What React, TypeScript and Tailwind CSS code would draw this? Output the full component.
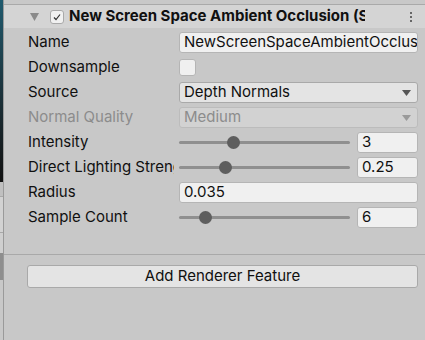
import React from "react";

const Slider = ({ pos, value }: { pos: number; value: string }) => (
  <div className="flex items-center gap-[7px] min-w-0">
    <div className="relative h-[21px] flex-1 min-w-0 flex items-center">
      <div className="h-[3px] w-full bg-[#8f8f8f] rounded-full"></div>
      <div
        className="absolute top-[4px] w-[13px] h-[13px] rounded-full bg-[#5e5e5e]"
        style={{ left: pos }}
      ></div>
    </div>
    <div className="w-[61px] shrink-0 h-[21px] bg-[#f0f0f0] border border-[#b5b5b5] rounded-[3px] px-[4px] flex items-center">
      {value}
    </div>
  </div>
);

const Row = ({
  label,
  disabled,
  children,
}: {
  label: string;
  disabled?: boolean;
  children: React.ReactNode;
}) => (
  <div className="flex items-center h-[25px]">
    <div
      className={`w-[146px] mr-[5px] shrink-0 overflow-hidden whitespace-nowrap ${
        disabled ? "text-[#8c8c8c]" : "text-[#101010]"
      }`}
    >
      {label}
    </div>
    <div className="flex-1 min-w-0">{children}</div>
  </div>
);

const App: React.FC = () => {
  return (
    <div
      className="w-[425px] h-[340px] bg-[#c8c8c8] flex overflow-hidden text-[15px] text-[#101010]"
      style={{ fontFamily: "Inter, 'Noto Sans', sans-serif" }}
    >
      {/* left window edge */}
      <div className="w-[3px] shrink-0 flex flex-col">
        <div className="h-[182px] bg-gradient-to-b from-[#1f5a6e] to-[#111]"></div>
        <div className="h-[15px] bg-[#c0c0c0] border-b border-[#a8a8a8]"></div>
        <div className="h-[36px] bg-[#d2d2d2] border-b border-[#a8a8a8]"></div>
        <div className="h-[20px] bg-[#cfcfcf]"></div>
        <div className="h-[27px] bg-[#8e8e8e]"></div>
        <div className="flex-1 bg-[#c8c8c8]"></div>
      </div>
      <div className="w-px shrink-0 bg-[#9a9a9a]"></div>

      <div className="flex-1 min-w-0 flex flex-col">
        <div className="h-[5px] border-b border-[#a9a9a9]"></div>
        {/* header */}
        <div className="h-[23px] bg-[#d4d4d4] flex items-center pl-[26px] pr-[13px]">
          <svg width="9" height="8" viewBox="0 0 9 8" className="mr-[11px] shrink-0">
            <path d="M0 0 H9 L4.5 8 Z" fill="#8a8a8a" />
          </svg>
          <div className="w-[14px] h-[14px] shrink-0 rounded-[3px] bg-[#f1f1f1] border border-[#a9a9a9] flex items-center justify-center mr-[5px]">
            <svg width="10" height="10" viewBox="0 0 10 10">
              <path d="M2 5.5 L4 7.5 L8 2.5" stroke="#333" strokeWidth="1.2" fill="none" />
            </svg>
          </div>
          <div className="w-[296px] shrink-0 overflow-hidden whitespace-nowrap font-bold text-[15px]">
            New Screen Space Ambient Occlusion (SSAO)
          </div>
          <div className="flex flex-col gap-[2px] ml-auto shrink-0">
            <div className="w-[2px] h-[2px] bg-[#666]"></div>
            <div className="w-[2px] h-[2px] bg-[#666]"></div>
            <div className="w-[2px] h-[2px] bg-[#666]"></div>
          </div>
        </div>

        {/* properties */}
        <div className="pl-[24px] pr-[7px] pt-[2px] flex flex-col">
          <Row label="Name">
            <div className="h-[21px] bg-[#f0f0f0] border border-[#b5b5b5] rounded-[3px] px-[4px] flex items-center overflow-hidden whitespace-nowrap">
              NewScreenSpaceAmbientOcclusion
            </div>
          </Row>
          <Row label="Downsample">
            <div className="w-[17px] h-[17px] bg-[#f0f0f0] border border-[#b5b5b5] rounded-[3px]"></div>
          </Row>
          <Row label="Source">
            <div className="h-[21px] bg-[#e4e4e4] border border-[#a9a9a9] rounded-[3px] pl-[4px] pr-[6px] flex items-center justify-between">
              <span>Depth Normals</span>
              <svg width="9" height="6" viewBox="0 0 9 6">
                <path d="M0 0 H9 L4.5 6 Z" fill="#555" />
              </svg>
            </div>
          </Row>
          <Row label="Normal Quality" disabled>
            <div className="h-[21px] bg-[#d2d2d2] border border-[#bcbcbc] rounded-[3px] pl-[4px] pr-[6px] flex items-center justify-between text-[#8c8c8c]">
              <span>Medium</span>
              <svg width="9" height="6" viewBox="0 0 9 6">
                <path d="M0 0 H9 L4.5 6 Z" fill="#9a9a9a" />
              </svg>
            </div>
          </Row>
          <Row label="Intensity">
            <Slider pos={48} value="3" />
          </Row>
          <Row label="Direct Lighting Strength">
            <Slider pos={40} value="0.25" />
          </Row>
          <Row label="Radius">
            <div className="h-[21px] bg-[#f0f0f0] border border-[#b5b5b5] rounded-[3px] px-[4px] flex items-center">
              0.035
            </div>
          </Row>
          <Row label="Sample Count">
            <Slider pos={20} value="6" />
          </Row>
        </div>

        <div className="h-[24px]"></div>
        <div className="border-b border-[#a9a9a9]"></div>

        <div className="pl-[23px] pr-[7px] pt-[10px]">
          <div className="h-[23px] bg-[#e4e4e4] border border-[#a9a9a9] rounded-[3px] flex items-center justify-center">
            Add Renderer Feature
          </div>
        </div>
      </div>
    </div>
  );
};

export default App;
